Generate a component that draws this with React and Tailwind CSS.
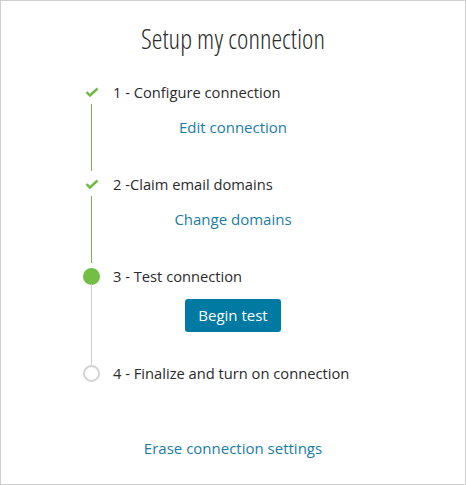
function Check() {
	return (
		<svg width="14" height="14" viewBox="0 0 14 14" fill="none">
			<path
				d="M1.5 7.2 L5 10.5 L12.5 3.5"
				stroke="#6dbb45"
				strokeWidth="2.4"
				strokeLinecap="butt"
				strokeLinejoin="miter"
			/>
		</svg>
	)
}

const steps = [
	{ label: '1 - Configure connection', state: 'done', action: 'Edit connection', height: 'h-[92px]' },
	{ label: '2 -Claim email domains', state: 'done', action: 'Change domains', height: 'h-[92px]' },
	{ label: '3 - Test connection', state: 'current', button: 'Begin test', height: 'h-[97px]' },
	{ label: '4 - Finalize and turn on connection', state: 'todo' },
]

function StepIcon({ state }) {
	if (state === 'done') return <Check />
	if (state === 'current') return <div className="w-[17px] h-[17px] rounded-full bg-[#72bf44]" />
	return <div className="w-[17px] h-[17px] rounded-full border-2 border-[#d4d4d4] bg-white" />
}

function StepLine({ state }) {
	// green until the current step, grey after it
	if (state === 'done') return <div className="w-px flex-1 mb-px bg-[#6fbb3f]" />
	return <div className="w-px flex-1 -mt-1 -mb-1 bg-[#d0d0d0]" />
}

function App() {
	return (
		<div className="w-[466px] h-[485px] border border-[#cfcfcf] bg-white text-[#2b2b2b] font-['Open_Sans',sans-serif]">
			<h1 className="pt-[22px] text-center text-[27px] leading-8 font-light font-stretch-condensed">
				Setup my connection
			</h1>

			<div className="mt-[25px] ml-[80px]">
				{steps.map((step) => (
					<div key={step.label} className={`flex ${step.height || ''}`}>
						<div className="w-[21px] flex flex-col items-center">
							<div className="h-6 flex items-center justify-center">
								<StepIcon state={step.state} />
							</div>
							{step.height && <StepLine state={step.state} />}
						</div>
						<div className="ml-[11px] w-[240px]">
							<div className="h-6 leading-6 text-[14.7px] whitespace-nowrap">{step.label}</div>
							{step.action && (
								<div className="mt-[11px] text-center leading-6 text-[15px] text-[#1a7ca6]">
									{step.action}
								</div>
							)}
							{step.button && (
								<div className="mt-[11px] flex justify-center">
									<button className="w-[96px] h-[33px] rounded-[3px] bg-[#0079a3] text-white text-[15px]">
										{step.button}
									</button>
								</div>
							)}
						</div>
					</div>
				))}
			</div>

			<div className="mt-[51px] text-center leading-6 text-[15px] text-[#1a7ca6]">
				Erase connection settings
			</div>
		</div>
	)
}

export default App
